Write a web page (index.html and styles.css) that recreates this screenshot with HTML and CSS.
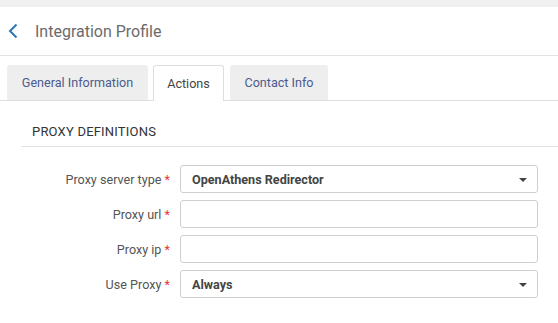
FILE: index.html
```html
<!DOCTYPE html>
<html lang="en">
<head>
  <meta charset="UTF-8" />
  <title>Integration Profile</title>
  <link rel="stylesheet" href="styles.css">
</head>
<body>
  <div class="top-strip"></div>
  <header class="page-header">
    <a class="back" href="#">
      <svg width="10" height="16" viewBox="0 0 10 16"><path d="M8.5 1.5 L2 8 L8.5 14.5" fill="none" stroke="#2f76b7" stroke-width="2"/></svg>
    </a>
    <h1>Integration Profile</h1>
  </header>

  <nav class="tabs">
    <a class="tab tab-general" href="#">General Information</a>
    <a class="tab tab-actions active" href="#">Actions</a>
    <a class="tab tab-contact" href="#">Contact Info</a>
  </nav>

  <section class="section">
    <h2>Proxy Definitions</h2>
    <div class="form">
      <div class="row">
        <label>Proxy server type <span class="req">*</span></label>
        <div class="field select">OpenAthens Redirector<span class="caret"></span></div>
      </div>
      <div class="row">
        <label>Proxy url <span class="req">*</span></label>
        <div class="field"></div>
      </div>
      <div class="row">
        <label>Proxy ip <span class="req">*</span></label>
        <div class="field"></div>
      </div>
      <div class="row">
        <label>Use Proxy <span class="req">*</span></label>
        <div class="field select">Always<span class="caret"></span></div>
      </div>
    </div>
  </section>
</body>
</html>
```

FILE: styles.css
```css
body {
  margin: 0;
  font-family: Roboto, "Liberation Sans", sans-serif;
  background: #fff;
  color: #555;
}
.top-strip {
  height: 7px;
  background: #f0f0f0;
}
.page-header {
  height: 48px;
  display: flex;
  align-items: center;
  border-bottom: 1px solid #e2e2e2;
}
.back {
  display: flex;
  margin-left: 8px;
  width: 27px;
}
.page-header h1 {
  margin: 0;
  font-size: 16px;
  font-weight: 400;
  color: #6b6b6b;
}
.tabs {
  display: flex;
  align-items: flex-end;
  gap: 5px;
  padding: 0 0 0 7px;
  margin-top: 9px;
  border-bottom: 1px solid #dedede;
  height: 35px;
}
.tab {
  box-sizing: border-box;
  display: flex;
  align-items: center;
  justify-content: center;
  height: 35px;
  white-space: nowrap;
  background: #eeeeee;
  border-radius: 3px 3px 0 0;
  font-size: 12.6px;
  color: #4a5c8e;
  text-decoration: none;
}
.tab-general { width: 141px; }
.tab-actions { width: 71px; }
.tab-contact { width: 98px; margin-left: 1px; }
.tab.active {
  background: #fff;
  border: 1px solid #dedede;
  border-bottom: none;
  color: #444;
  height: 36px;
  margin-bottom: -1px;
}
.section {
  margin-left: 21px;
}
.section h2 {
  margin: 0;
  padding: 23px 0 0 11px;
  height: 22px;
  font-size: 13px;
  font-weight: 400;
  text-transform: uppercase;
  color: #333;
  letter-spacing: 0.2px;
  border-bottom: 1px solid #e2e2e2;
}
.form {
  padding-top: 18px;
}
.row {
  display: flex;
  align-items: center;
  margin-bottom: 7px;
}
.row label {
  width: 149px;
  text-align: right;
  padding-right: 10px;
  font-size: 12.6px;
  color: #555;
}
.req { color: #e8383d; }
.field {
  position: relative;
  box-sizing: border-box;
  width: 358px;
  height: 28px;
  border: 1px solid #cfcfcf;
  border-radius: 3px;
  display: flex;
  align-items: center;
  padding-left: 11px;
  font-size: 12.6px;
  font-weight: 700;
  color: #444;
}
.caret {
  position: absolute;
  right: 10px;
  top: 12px;
  border-left: 4px solid transparent;
  border-right: 4px solid transparent;
  border-top: 4px solid #444;
}
```
